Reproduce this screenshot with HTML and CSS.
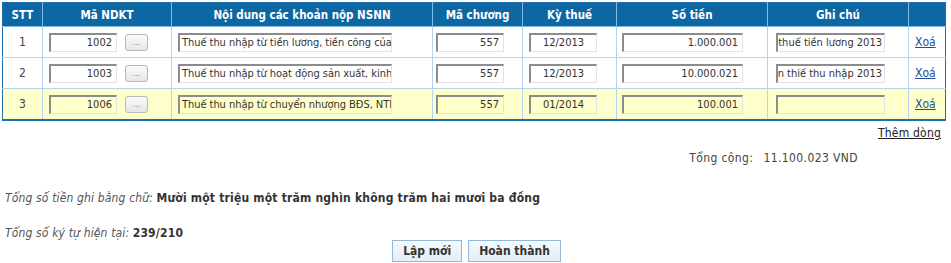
FILE: index.html
```html
<!DOCTYPE html>
<html lang="vi">
<head>
<meta charset="utf-8">
<title>Khoản nộp NSNN</title>
<link rel="stylesheet" href="styles.css">
</head>
<body>
<table class="grid">
  <colgroup>
    <col class="c-stt"><col class="c-ndkt"><col class="c-nd"><col class="c-chuong"><col class="c-ky"><col class="c-tien"><col class="c-ghichu"><col class="c-xoa">
  </colgroup>
  <thead>
    <tr><th>STT</th><th>Mã NDKT</th><th>Nội dung các khoản nộp NSNN</th><th>Mã chương</th><th>Kỳ thuế</th><th>Số tiền</th><th>Ghi chú</th><th></th></tr>
  </thead>
  <tbody>
    <tr>
      <td class="stt">1</td>
      <td class="ndkt"><span class="inp w68 r">1002</span><span class="dots">...</span></td>
      <td class="nd"><span class="inp w214">Thuế thu nhập từ tiền lương, tiền công của</span></td>
      <td class="chuong"><span class="inp w68 r">557</span></td>
      <td class="ky"><span class="inp w68 c">12/2013</span></td>
      <td class="tien"><span class="inp w121 r">1.000.001</span></td>
      <td class="ghichu"><span class="inp w109 clip">Nộp thuế tiền lương 2013</span></td>
      <td class="xoa"><a href="#">Xoá</a></td>
    </tr>
    <tr>
      <td class="stt">2</td>
      <td class="ndkt"><span class="inp w68 r">1003</span><span class="dots">...</span></td>
      <td class="nd"><span class="inp w214">Thuế thu nhập từ hoạt động sản xuất, kinh</span></td>
      <td class="chuong"><span class="inp w68 r">557</span></td>
      <td class="ky"><span class="inp w68 c">12/2013</span></td>
      <td class="tien"><span class="inp w121 r">10.000.021</span></td>
      <td class="ghichu"><span class="inp w109 clip">Quyết toán thiế thu nhập 2013</span></td>
      <td class="xoa"><a href="#">Xoá</a></td>
    </tr>
    <tr class="sel">
      <td class="stt">3</td>
      <td class="ndkt"><span class="inp w68 r">1006</span><span class="dots">...</span></td>
      <td class="nd"><span class="inp w214">Thuế thu nhập từ chuyển nhượng BĐS, NTK</span></td>
      <td class="chuong"><span class="inp w68 r">557</span></td>
      <td class="ky"><span class="inp w68 c">01/2014</span></td>
      <td class="tien"><span class="inp w121 r">100.001</span></td>
      <td class="ghichu"><span class="inp w109"></span></td>
      <td class="xoa"><a href="#">Xoá</a></td>
    </tr>
  </tbody>
</table>
<div class="add"><a href="#">Thêm dòng</a></div>
<div class="total"><span class="lbl">Tổng cộng:</span><span class="val">11.100.023 VND</span></div>
<p class="words"><i>Tổng số tiền ghi bằng chữ:</i> <b>Mười một triệu một trăm nghìn không trăm hai mươi ba đồng</b></p>
<p class="count"><i>Tổng số ký tự hiện tại:</i> <b>239/210</b></p>
<div class="actions"><button class="btn" type="button">Lập mới</button><button class="btn" type="button">Hoàn thành</button></div>
</body>
</html>
```
FILE: styles.css
```css
body {
  margin: 2px;
  font-family: "DejaVu Sans Condensed", "DejaVu Sans", sans-serif;
  font-size: 12px;
  line-height: 14px;
  color: #333;
  background: #fff;
}
.grid {
  width: 943px;
  table-layout: fixed;
  border-collapse: collapse;
  border: 1px solid #1d6fae;
  border-bottom: 2px solid #1d6fae;
}
.c-stt { width: 40px; }
.c-ndkt { width: 129px; }
.c-nd { width: 261px; }
.c-chuong { width: 90px; }
.c-ky { width: 94px; }
.c-tien { width: 151px; }
.c-ghichu { width: 141px; }
.c-xoa { width: 37px; }
.grid th {
  background: #0c67a3;
  color: #fff;
  font-size: 11.5px;
  font-weight: bold;
  height: 23px;
  padding: 0;
  text-align: center;
  border-left: 1px solid #7fbbe4;
  border-bottom: 1px solid #7fbbe4;
}
.grid th:first-child { border-left: none; }
.grid td {
  height: 30px;
  padding: 0;
  border-left: 1px solid #b5d5ee;
  border-top: 1px solid #b5d5ee;
  color: #444;
  white-space: nowrap;
}
.grid td:first-child { border-left: none; }
.grid tr.sel td { background: #ffffcc; }
.stt { text-align: center; }
.ndkt { padding-left: 6px !important; }
.nd { padding-left: 6px !important; }
.chuong { padding-left: 3px !important; }
.ky { padding-left: 6px !important; }
.tien { padding-left: 5px !important; }
.ghichu { padding-left: 8px !important; }
.xoa { padding-left: 6px !important; }
.inp {
  display: inline-block;
  vertical-align: middle;
  box-sizing: border-box;
  height: 19px;
  line-height: 16px;
  padding: 0 4px;
  font-size: 11px;
  background: #fff;
  border-top: 2px solid #8c8c8c;
  border-left: 2px solid #8c8c8c;
  border-right: 1px solid #e2e2e2;
  border-bottom: 1px solid #e2e2e2;
  overflow: hidden;
  white-space: nowrap;
  color: #333;
}
.sel .inp { background: #ffffc8; }
.inp.r { text-align: right; }
.inp.c { text-align: center; }
.inp.clip { direction: rtl; text-align: left; padding-right: 2px; }
.w68 { width: 68px; }
.w214 { width: 214px; padding-left: 2px; letter-spacing: -0.05px; }
.w121 { width: 121px; }
.w109 { width: 109px; padding-left: 1px; }
.dots {
  display: inline-block;
  vertical-align: middle;
  box-sizing: border-box;
  width: 23px;
  height: 17px;
  margin-left: 8px;
  border: 1px solid #b8b8b8;
  border-radius: 3px;
  background: linear-gradient(#fafafa, #e6e6e6);
  color: #888;
  font-size: 9px;
  line-height: 14px;
  text-align: center;
}
.xoa a { color: #1b4f9a; text-decoration: underline; font-size: 12px; }
.add {
  margin-top: 5px;
  text-align: right;
  padding-right: 8px;
  letter-spacing: 0.2px;
}
.add a { color: #222; text-decoration: underline; }
.total {
  margin-top: 11px;
  display: flex;
  justify-content: flex-end;
  gap: 10px;
  padding-right: 91px;
  color: #444;
  letter-spacing: 0.4px;
}
.words { margin: 26px 0 0 3px; color: #555; }
.count { margin: 21px 0 0 3px; color: #555; }
.words i, .count i { letter-spacing: 0.15px; }
.words b, .count b { color: #333; letter-spacing: 0.2px; }
.actions {
  display: flex;
  justify-content: center;
  gap: 6px;
  padding-left: 2px;
}
.btn {
  font-family: inherit;
  font-size: 12px;
  font-weight: bold;
  color: #333;
  height: 22px;
  padding: 0 10px;
  border: 1px solid #94b9d8;
  background: linear-gradient(#f4f9fd, #e3eef8);
  border-radius: 0;
}
```
